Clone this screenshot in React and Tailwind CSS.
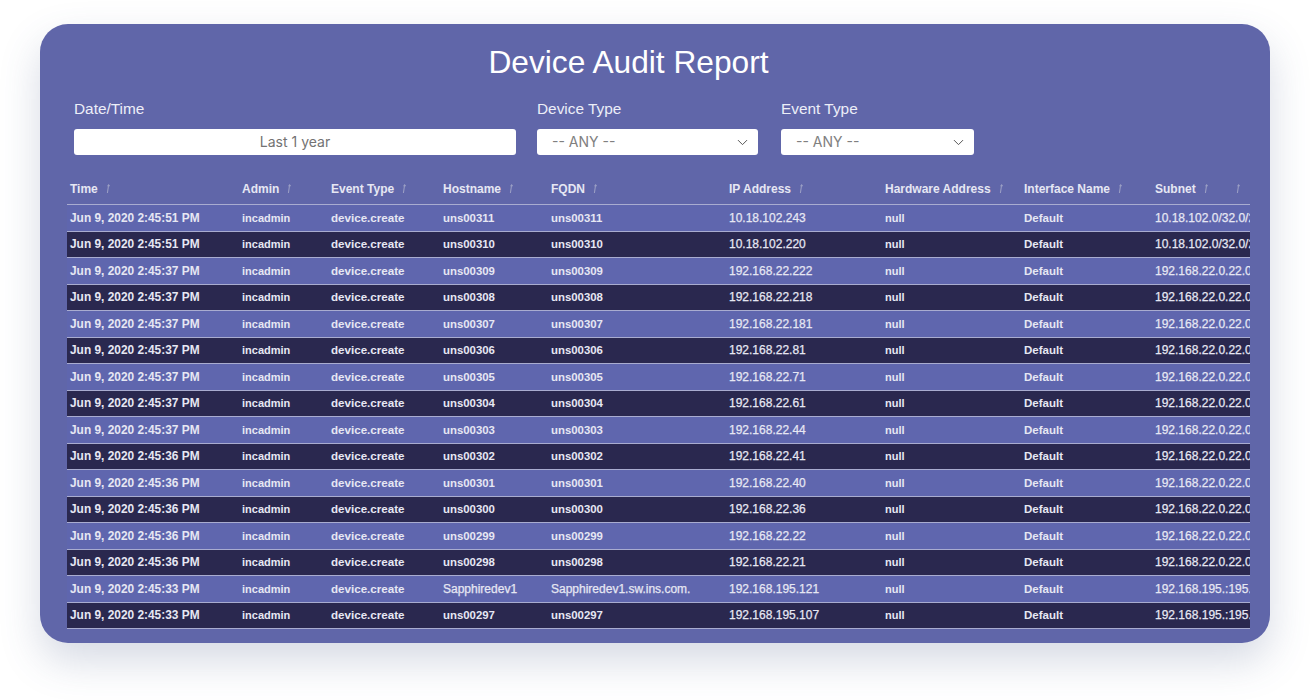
import { ChevronDown } from "lucide-react";

const columns = ["Time", "Admin", "Event Type", "Hostname", "FQDN", "IP Address", "Hardware Address", "Interface Name", "Subnet"];

const gridCols = "grid grid-cols-[172px_89px_112px_108px_178px_156px_139px_131px_1fr]";

const rows = [
  ["Jun 9, 2020 2:45:51 PM", "uns00311", "10.18.102.243", "10.18.102.0/32.0/24"],
  ["Jun 9, 2020 2:45:51 PM", "uns00310", "10.18.102.220", "10.18.102.0/32.0/24"],
  ["Jun 9, 2020 2:45:37 PM", "uns00309", "192.168.22.222", "192.168.22.0.22.0/24"],
  ["Jun 9, 2020 2:45:37 PM", "uns00308", "192.168.22.218", "192.168.22.0.22.0/24"],
  ["Jun 9, 2020 2:45:37 PM", "uns00307", "192.168.22.181", "192.168.22.0.22.0/24"],
  ["Jun 9, 2020 2:45:37 PM", "uns00306", "192.168.22.81", "192.168.22.0.22.0/24"],
  ["Jun 9, 2020 2:45:37 PM", "uns00305", "192.168.22.71", "192.168.22.0.22.0/24"],
  ["Jun 9, 2020 2:45:37 PM", "uns00304", "192.168.22.61", "192.168.22.0.22.0/24"],
  ["Jun 9, 2020 2:45:37 PM", "uns00303", "192.168.22.44", "192.168.22.0.22.0/24"],
  ["Jun 9, 2020 2:45:36 PM", "uns00302", "192.168.22.41", "192.168.22.0.22.0/24"],
  ["Jun 9, 2020 2:45:36 PM", "uns00301", "192.168.22.40", "192.168.22.0.22.0/24"],
  ["Jun 9, 2020 2:45:36 PM", "uns00300", "192.168.22.36", "192.168.22.0.22.0/24"],
  ["Jun 9, 2020 2:45:36 PM", "uns00299", "192.168.22.22", "192.168.22.0.22.0/24"],
  ["Jun 9, 2020 2:45:36 PM", "uns00298", "192.168.22.21", "192.168.22.0.22.0/24"],
  ["Jun 9, 2020 2:45:33 PM", "Sapphiredev1", "192.168.195.121", "192.168.195.:195.0/24", "Sapphiredev1.sw.ins.com."],
  ["Jun 9, 2020 2:45:33 PM", "uns00297", "192.168.195.107", "192.168.195.:195.0/24"],
];

function SortIcon() {
  return (
    <svg width="6" height="10" viewBox="0 0 6 10" className="ml-[7px] shrink-0 text-[#9a9ec4]" fill="none" stroke="currentColor" strokeWidth="1.1">
      <path d="M3.6 1 2.4 9M2.6 2.4 3.6 1 4.6 2.2" />
    </svg>
  );
}

function SelectBox({ width }) {
  return (
    <div className={`flex h-[26px] ${width} items-center justify-between rounded-[3px] bg-white pl-[15px] pr-[7px] font-['Inter',sans-serif] text-sm text-[#808080]`}>
      <span>-- ANY --</span>
      <ChevronDown size={17} strokeWidth={1.4} className="text-[#555]" />
    </div>
  );
}

export default function App() {
  return (
    <div className="h-[700px] w-[1310px] overflow-hidden bg-white pl-10 pt-6 font-['Liberation_Sans',Arial,sans-serif]">
      <div className="h-[619px] w-[1230px] rounded-[28px] bg-[#6066a9] pl-[27px] pr-5 pt-[19px] shadow-[0_18px_40px_rgba(70,85,130,0.22)]">
        <h1 className="pr-[60px] text-center text-[31.7px] leading-[38px] text-white">Device Audit Report</h1>

        <div className="mt-[18px] flex pl-[7px] text-[#eceef8]">
          <div className="w-[463px]">
            <div className="text-[15.4px] leading-[20px]">Date/Time</div>
            <div className="mt-[10px] flex h-[26px] w-[442px] items-center justify-center rounded-[3px] bg-white font-['Inter',sans-serif] text-sm text-[#737373]">
              Last 1 year
            </div>
          </div>
          <div className="w-[244px]">
            <div className="text-[15.4px] leading-[20px]">Device Type</div>
            <div className="mt-[10px]"><SelectBox width="w-[221px]" /></div>
          </div>
          <div>
            <div className="text-[15.4px] leading-[20px]">Event Type</div>
            <div className="mt-[10px]"><SelectBox width="w-[193px]" /></div>
          </div>
        </div>

        <div className="mt-[21px] w-[1183px] overflow-hidden text-[#e6e7f3]">
          <div className={`${gridCols} h-[29px] items-center border-b border-[#a9acd0] pb-[2px] pl-[3px] text-[12px] font-bold`}>
            {columns.map((col) => (
              <div key={col} className="flex items-center whitespace-nowrap">
                {col}
                <SortIcon />
                {col === "Subnet" && <span className="ml-[19px]"><SortIcon /></span>}
              </div>
            ))}
          </div>
          {rows.map((row, i) => (
            <div
              key={row[1]}
              className={`${gridCols} h-[26.5px] items-baseline whitespace-nowrap border-b border-[#a9acd0] pl-[3px] pt-[4.5px] text-[11.5px] font-bold leading-[15px] ${i % 2 ? "bg-[#2a284f]" : "bg-[#5f66ae]"}`}
            >
              <div className="text-[11.9px]">{row[0]}</div>
              <div className="text-[11px]">incadmin</div>
              <div className="text-[11.6px]">device.create</div>
              <div className={row[1] === "Sapphiredev1" ? "text-[12px] font-normal [-webkit-text-stroke:0.25px]" : "text-[11.4px]"}>{row[1]}</div>
              <div className={row[4] ? "text-[12px] font-normal [-webkit-text-stroke:0.25px]" : "text-[11.4px]"}>{row[4] || row[1]}</div>
              <div className="text-[12px] font-normal [-webkit-text-stroke:0.25px]">{row[2]}</div>
              <div className="text-[11px]">null</div>
              <div>Default</div>
              <div className="overflow-hidden text-[12px] font-normal [-webkit-text-stroke:0.25px]">{row[3]}</div>
            </div>
          ))}
        </div>
      </div>
    </div>
  );
}
